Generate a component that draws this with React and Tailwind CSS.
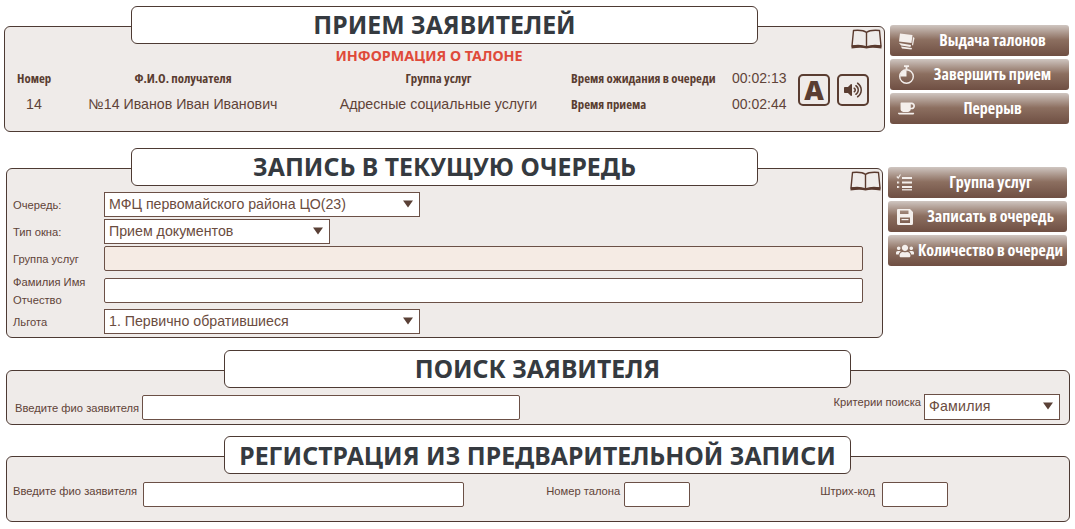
import React from 'react';
import { FaCoffee, FaUsers, FaVolumeUp } from 'react-icons/fa';

const brown = 'text-[#5f4338]';
const arial = "font-['Liberation_Sans',sans-serif]";
const narrow = "font-['Open_Sans',sans-serif] [font-stretch:75%] font-bold";

// titles overlap the top edge of their panel
const Title = ({ children, className }) => (
  <div
    className={`relative z-10 h-[38px] w-[627px] pb-[2px] rounded-[6px] border border-[#4d3a33] bg-white flex items-center justify-center font-['Noto_Sans',sans-serif] font-bold text-[24.8px] leading-none text-[#353a40] ${className}`}
  >
    {children}
  </div>
);

const Arrow = () => (
  <svg width="10" height="8" viewBox="0 0 10 8" className="shrink-0 mb-[2px]">
    <path d="M0 0.5h10L5 7.5z" fill="#5a4036" />
  </svg>
);

const Select = ({ children, className }) => (
  <div
    className={`border border-[#6b5046] bg-white pl-[4px] pr-[6px] flex items-center justify-between ${arial} text-[14.2px] text-[#6b4c40] ${className}`}
  >
    <span>{children}</span>
    <Arrow />
  </div>
);

const Input = ({ className, bg = 'bg-white' }) => (
  <input
    className={`block h-[25px] rounded-[2px] border border-[#6b5046] outline-none ${bg} ${className}`}
  />
);

const Book = ({ className }) => (
  <svg width="31" height="20" viewBox="0 0 31 20" fill="none" className={className}>
    <path
      d="M15.5 3.5C13 1.5 8 1 2.5 1.5L1 17C7 16 12 16.5 15.5 18C19 16.5 24 16 30 17L28.5 1.5C23 1 18 1.5 15.5 3.5V18"
      stroke="#5a3a2e"
      strokeWidth="1.4"
      strokeLinejoin="round"
    />
    <path d="M0.5 19.5V16.8C7 16 12 16.5 15.5 18C19 16.5 24 16 30.5 16.8V19.5C24 18.5 19 18.5 15.5 19.5C12 18.5 7 18.5 0.5 19.5z" fill="#5a3a2e" />
  </svg>
);

const TicketsIcon = () => (
  <svg width="17" height="18" viewBox="0 0 17 18" fill="#f4efec">
    <path d="M2 1.5L14.5 3L13.5 11L1 9.5z" />
    <path d="M1 11L13 13L12.5 15L3 13.5z" />
    <path d="M3 14.5L14 16L13.5 17.5L4 16.5z" />
    <path d="M15 5L16.5 6L15 13.5L14 13z" />
  </svg>
);

const TimerIcon = () => (
  <svg width="17" height="20" viewBox="0 0 17 20" fill="none" stroke="#f4efec" strokeWidth="1.4">
    <circle cx="8.5" cy="11.5" r="6.8" />
    <path d="M8.5 11.5V5H8.5A6.5 6.5 0 0 0 2 11.5z" fill="#f4efec" stroke="none" />
    <path d="M6 1.2H11M8.5 1.2V4.5" strokeWidth="1.8" />
  </svg>
);

const ListIcon = () => (
  <svg width="16" height="17" viewBox="0 0 16 17" fill="none" stroke="#f4efec" strokeWidth="1.8">
    <path d="M0.8 2.5L2.2 4L4.5 0.5" strokeWidth="1.1" />
    <path d="M6 4H16M6 8.5H16M6 13H16" />
    <path d="M1 8.5H4M1 13H4" strokeDasharray="1.8 1" />
    <path d="M6 15.8H16" strokeWidth="1.2" />
  </svg>
);

const SaveIcon = () => (
  <svg width="18" height="18" viewBox="0 0 18 18">
    <path
      fillRule="evenodd"
      fill="#f4efec"
      d="M2 1H14L17 4V15.5A1.5 1.5 0 0 1 15.5 17H2.5A1.5 1.5 0 0 1 1 15.5V2A1 1 0 0 1 2 1zM4 2.5V6H12.5V2.5zM4 9.5V15H14V9.5z"
    />
    <path d="M5.5 11H12.5V12.2H5.5z" fill="#f4efec" />
  </svg>
);

const SideButton = ({ icon, label }) => (
  <div className="h-[31px] rounded-[3px] bg-gradient-to-b from-[#cfc6c1] via-[#8c6f60] via-[48%] to-[#6f4f43] flex items-center text-white">
    <span className="w-[26px] pl-[8px] shrink-0 flex items-center">{icon}</span>
    <span className={`flex-1 pb-[2px] text-center whitespace-nowrap ${narrow} text-[16px]`}>
      {label}
    </span>
  </div>
);

const Head = ({ children, className = '' }) => (
  <div className={`${narrow} whitespace-nowrap text-[12.8px] text-[#5a3d31] ${className}`}>
    {children}
  </div>
);

const Label = ({ children, className = '' }) => (
  <span className={`${arial} text-[11.2px] ${brown} ${className}`}>{children}</span>
);

// label cell of the form grid, centred on the 25px control next to it
const FormLabel = ({ children }) => (
  <div className="h-[25px] flex items-center">
    <Label className="leading-[18px]">{children}</Label>
  </div>
);

const Value = ({ children, className = '' }) => (
  <span className={`${arial} text-[14.2px] ${brown} ${className}`}>{children}</span>
);

const panel = 'relative rounded-[6px] border border-[#4d3a33] bg-[#efebe9]';

export default function App() {
  return (
    <div className="w-[1075px] h-[529px] bg-white overflow-hidden pt-[6px]">
      {/* прием заявителей */}
      <div className="flex items-start">
        <div className="w-[881px] ml-[4px]">
          <Title className="ml-[127px]">ПРИЕМ ЗАЯВИТЕЛЕЙ</Title>
          <div className={`${panel} -mt-[18px] h-[106px] pt-[20px] pl-[11px]`}>
            <Book className="absolute right-[2px] top-[2px]" />
            <div className="w-[826px] text-center font-['Noto_Sans',sans-serif] font-bold text-[14.3px] leading-[18px] text-[#df4a3a]">
              ИНФОРМАЦИЯ О ТАЛОНЕ
            </div>
            <div className="mt-[1px] grid grid-cols-[46px_242px_267px_161px_66px_auto] grid-rows-[25px_27px] items-center">
              <Head className="pl-[1px]">Номер</Head>
              <Head className="text-center">Ф.И.О. получателя</Head>
              <Head className="text-center pl-[2px]">Группа услуг</Head>
              <Head>Время ожидания в очереди</Head>
              <span className={`${arial} text-[14px] ${brown}`}>00:02:13</span>
              <div className="row-span-2 -mt-[4px] flex gap-[7px]">
                <div className="w-[32px] h-[32px] rounded-[5px] border-2 border-[#5a3d31] flex items-center justify-center font-['Noto_Sans',sans-serif] font-black text-[27px] text-[#5a3d31]">
                  A
                </div>
                <div className="w-[32px] h-[32px] rounded-[5px] border-2 border-[#5a3d31] flex items-center justify-center text-[#5a3d31]">
                  <FaVolumeUp size={18} />
                </div>
              </div>
              <Value className="pl-[10px]">14</Value>
              <Value className="text-center">№14 Иванов Иван Иванович</Value>
              <Value className="text-center pl-[2px]">Адресные социальные услуги</Value>
              <Head>Время приема</Head>
              <span className={`${arial} text-[14px] ${brown}`}>00:02:44</span>
            </div>
          </div>
        </div>
        <div className="w-[179px] ml-[5px] mt-[19px] flex flex-col gap-[3px]">
          <SideButton icon={<TicketsIcon />} label="Выдача талонов" />
          <SideButton icon={<TimerIcon />} label="Завершить прием" />
          <SideButton icon={<FaCoffee size={17} color="#f4efec" />} label="Перерыв" />
        </div>
      </div>

      {/* запись в текущую очередь */}
      <div className="flex items-start mt-[16px]">
        <div className="w-[877px] ml-[6px]">
          <Title className="ml-[125px]">ЗАПИСЬ В ТЕКУЩУЮ ОЧЕРЕДЬ</Title>
          <div className={`${panel} -mt-[18px] h-[170px] pt-[23px] pl-[6px]`}>
            <Book className="absolute right-[1px] top-[2px]" />
            <div className="grid grid-cols-[91px_auto] grid-rows-[27px_27px_32px_31px_25px] justify-start items-start">
              <FormLabel>Очередь:</FormLabel>
              <Select className="w-[316px] h-[25px]">МФЦ первомайского района ЦО(23)</Select>
              <FormLabel>Тип окна:</FormLabel>
              <Select className="w-[226px] h-[25px]">Прием документов</Select>
              <FormLabel>Группа услуг</FormLabel>
              <Input className="w-[759px]" bg="bg-[#f5ebe4]" />
              <FormLabel>
                Фамилия Имя
                <br />
                Отчество
              </FormLabel>
              <Input className="w-[759px]" />
              <FormLabel>Льгота</FormLabel>
              <Select className="w-[316px] h-[25px] pt-[1px]">1. Первично обратившиеся</Select>
            </div>
          </div>
        </div>
        <div className="w-[179px] ml-[5px] mt-[19px] flex flex-col gap-[3px]">
          <SideButton icon={<ListIcon />} label="Группа услуг" />
          <SideButton icon={<SaveIcon />} label="Записать в очередь" />
          <SideButton icon={<FaUsers size={18} color="#f4efec" />} label="Количество в очереди" />
        </div>
      </div>

      {/* поиск заявителя */}
      <div className="mt-[12px] ml-[6px] w-[1064px]">
        <Title className="ml-[218px]">ПОИСК ЗАЯВИТЕЛЯ</Title>
        <div className={`${panel} -mt-[18px] h-[55px] pt-[24px] pl-[8px] pr-[9px] flex items-start`}>
          <Label className="mt-[5px] mr-[3px]">Введите фио заявителя</Label>
          <Input className="w-[378px]" />
          <Label className="ml-auto -mt-[1px] mr-[3px]">Критерии поиска</Label>
          <Select className="w-[136px] h-[26px] -mt-[1px] tracking-[0.2px]">Фамилия</Select>
        </div>
      </div>

      {/* регистрация из предварительной записи */}
      <div className="mt-[11px] ml-[6px] w-[1064px]">
        <Title className="ml-[218px] pt-[2px]">РЕГИСТРАЦИЯ ИЗ ПРЕДВАРИТЕЛЬНОЙ ЗАПИСИ</Title>
        <div className={`${panel} -mt-[18px] h-[66px] pt-[25px] pl-[6px] flex items-start`}>
          <Label className="mt-[1px] mr-[6px]">Введите фио заявителя</Label>
          <Input className="w-[321px]" />
          <Label className="ml-[82px] mt-[1px] mr-[4px]">Номер талона</Label>
          <Input className="w-[66px]" />
          <Label className="ml-[130px] mt-[1px] mr-[7px]">Штрих-код</Label>
          <Input className="w-[66px]" />
        </div>
      </div>
    </div>
  );
}
